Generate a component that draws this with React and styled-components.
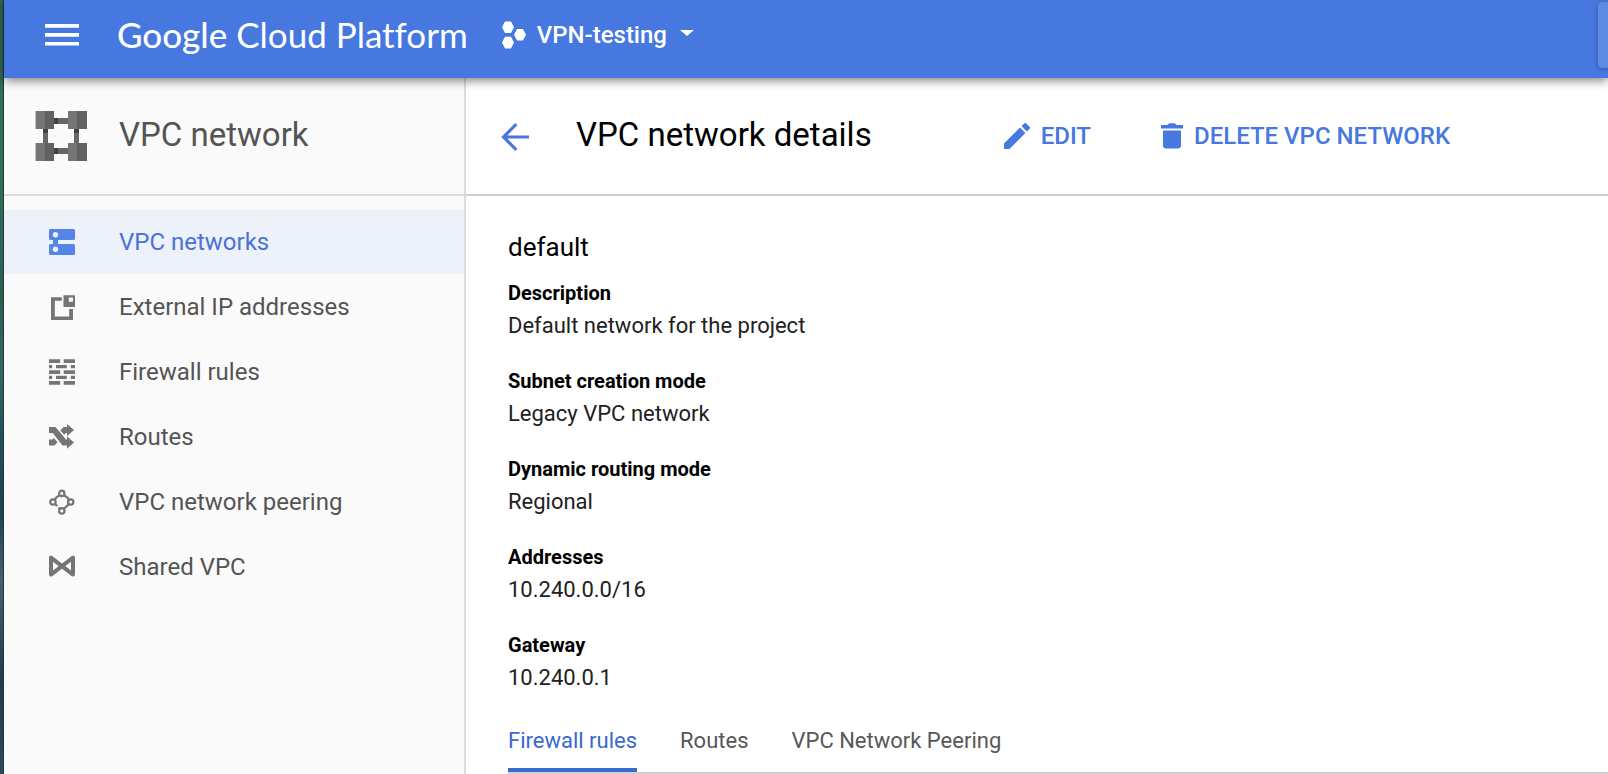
import React from "react";
import styled, { createGlobalStyle, css } from "styled-components";

const blue = "#4678e0";

const GlobalStyle = createGlobalStyle`
  *, *::before, *::after { box-sizing: border-box; }
  body { margin: 0; background: #fff; color: #000; font-family: Roboto, "Liberation Sans", sans-serif; }
  h1, h2, p, ul, dl, dd { margin: 0; padding: 0; }
  button { border: 0; padding: 0; background: none; font: inherit; color: inherit; cursor: pointer; }
  a { color: inherit; text-decoration: none; }
  svg { display: block; flex: none; }
`;

const Page = styled.div`
  min-height: 100vh;
  display: flex;
`;

const DesktopEdge = styled.div`
  flex: none;
  width: 4px;
  border-right: 1px solid #1d3b3c;
  background: linear-gradient(#2f6b55, #33705c 20%, #2b5f52 38%, #35695f 48%, #24505a 56%, #1d3f5c 66%, #46616f 75%, #22394f 88%, #2c4a5e);
`;

const Shell = styled.div`
  flex: 1;
  min-width: 0;
  display: flex;
  flex-direction: column;
`;

const TopBar = styled.header`
  position: relative;
  z-index: 1;
  flex: none;
  display: flex;
  align-items: center;
  height: 78px;
  padding: 0 0 8px 41px;
  background: ${blue};
  color: #fff;
  box-shadow: 0 2px 10px rgba(0, 0, 0, 0.55);
`;

const Logo = styled.a`
  margin: 0 34px 0 38px;
  padding-bottom: 2px;
  font-family: Lato, sans-serif;
  font-size: 35px;
  line-height: 40px;
  font-variant-ligatures: none;
  white-space: nowrap;
`;

const LogoStrong = styled.span`
  font-weight: 500;
`;

const ProjectButton = styled.button`
  display: flex;
  align-items: center;
  gap: 11px;
  font-size: 24px;
  line-height: 28px;
  font-weight: 500;
  white-space: nowrap;

  svg:last-child { margin-left: 2px; }
`;

const SearchBox = styled.input`
  width: 10px;
  height: 66px;
  margin-left: auto;
  border: 0;
  padding: 0;
  border-radius: 4px 0 0 4px;
  background: #5e8ae4;
  box-shadow: 0 1px 4px rgba(0, 0, 0, 0.3);
`;

const Body = styled.div`
  flex: 1;
  display: flex;
`;

const Sidebar = styled.nav`
  flex: none;
  width: 462px;
  border-right: 2px solid #dcdcdc;
  background: #fafafa;
  color: #545454;
`;

const SectionHead = styled.div`
  display: flex;
  align-items: center;
  gap: 32px;
  height: 118px;
  padding-left: 31px;
  border-bottom: 2px solid #dcdcdc;
`;

const Title = styled.h1`
  padding-bottom: 2px;
  font-size: 33px;
  line-height: 40px;
  font-weight: 400;
  white-space: nowrap;
`;

const Menu = styled.ul`
  display: flex;
  flex-direction: column;
  gap: 1px;
  padding-top: 14px;
  list-style: none;
`;

const MenuLink = styled.a`
  display: flex;
  align-items: center;
  gap: 44px;
  height: 64px;
  padding-left: 45px;
  font-size: 24px;
  line-height: 28px;

  svg { color: #757575; }

  ${({ $active }) => $active && css`
    background: #ecf1fa;
    color: #4a72d8;
    svg { color: #5585e6; }
  `}
`;

const Main = styled.main`
  flex: 1;
  min-width: 0;
`;

const Toolbar = styled.div`
  display: flex;
  align-items: center;
  height: 118px;
  padding-left: 35px;
  border-bottom: 2px solid #d0d0d0;

  ${Title} { margin: 0 132px 0 47px; }
`;

const BackButton = styled.button`
  padding-top: 2px;
  color: ${blue};
`;

const ActionButton = styled.button`
  display: flex;
  align-items: center;
  gap: 11px;
  margin-right: 70px;
  color: ${blue};
  font-size: 24px;
  line-height: 28px;
  font-weight: 500;
  white-space: nowrap;
`;

const Details = styled.section`
  padding: 35px 0 0 42px;
`;

const NetworkName = styled.h2`
  font-size: 26px;
  line-height: 32px;
  font-weight: 400;
`;

const Properties = styled.dl`
  display: flex;
  flex-direction: column;
  gap: 22px;
  padding-top: 14px;
`;

const PropertyName = styled.dt`
  font-size: 20px;
  line-height: 32px;
  font-weight: 700;
`;

const PropertyValue = styled.dd`
  font-size: 22px;
  line-height: 34px;
  color: #212121;
`;

const Tabs = styled.div`
  display: flex;
  gap: 43px;
  margin-top: 16px;
  border-bottom: 2px solid #d0d0d0;
`;

const Tab = styled.button`
  padding: 14px 0 11px;
  border-bottom: 4px solid ${({ $active }) => ($active ? "#3b68d1" : "transparent")};
  color: ${({ $active }) => ($active ? "#3b68d1" : "#575757")};
  font-size: 22px;
  line-height: 32px;
  white-space: nowrap;
`;

const HamburgerIcon = () => (
  <svg width="34" height="22" viewBox="0 0 34 22" fill="currentColor">
    <path d="M0 0h34v3.8H0zM0 9h34v3.8H0zM0 18h34v3.6H0z" />
  </svg>
);

const ProjectIcon = () => (
  <svg width="24" height="28" viewBox="0 0 24 28" fill="currentColor">
    <path d="M3 .4h6l3 5.8-3 5.8H3L0 6.200zM3 15.800h6l3 5.800-3 5.800H3L0 21.600zM15 8h6l3 5.800-3 5.800h-6l-3-5.800z" />
  </svg>
);

const CaretIcon = () => (
  <svg width="14" height="10" viewBox="0 0 14 10" fill="currentColor">
    <path d="M0 0h14L7 6z" />
  </svg>
);

const NetworkIcon = () => (
  <svg width="52" height="50" viewBox="0 0 52 50">
    <path fill="#666" d="M19 7h14v6H19zM19 37h14v6H19zM8 18h5v14H8zM39 18h5v14h-5z" />
    <path fill="#424242" d="M19 7h4v6h-4zM19 37h4v6h-4zM8 18h5v4H8zM39 18h5v4h-5z" />
    <path fill="#757575" d="M.6 0H10v18H.6zM33 0h9v18h-9zM.6 32H10v18H.6zM33 32h9v18h-9z" />
    <path fill="#616161" d="M10 0h9v18h-9zM42 0h10v18H42zM10 32h9v18h-9zM42 32h10v18H42z" />
  </svg>
);

const MenuIcon = ({ children }) => (
  <svg width="26" height="26" viewBox="0 0 26 26" fill="currentColor">{children}</svg>
);

const NetworksIcon = () => (
  <MenuIcon>
    <path
      fillRule="evenodd"
      d="M1.500 0h23Q26 0 26 1.500v8Q26 11 24.500 11H9v4h15.500q1.500 0 1.500 1.500v8q0 1.500-1.500 1.500h-23Q0 26 0 24.500v-8Q0 15 1.500 15H4v-4H1.500Q0 11 0 9.500v-8Q0 0 1.500 0zM6.500 3a2.700 2.700 0 1 0 0 5.400 2.700 2.700 0 0 0 0-5.400zm0 14.500a2.700 2.700 0 1 0 0 5.400 2.700 2.700 0 0 0 0-5.400z"
    />
  </MenuIcon>
);

const AddressIcon = () => (
  <MenuIcon>
    <path d="M2 3.200h10.800v3.600H5.800v15.600h14.400V15H24v11H2z" />
    <path fillRule="evenodd" d="M14.500 1.300H26V13H14.500zM19.800 3.600v4.200H24V3.600z" />
  </MenuIcon>
);

const FirewallIcon = () => (
  <MenuIcon>
    <path d="M0 .3h11.200V4H0zM14.700.3H26V4H14.700zM0 6h3.200v3.300H0zM7 6h10.800v3.300H7zM21.800 6H26v3.300h-4.200zM0 11.200h11.200V15H0zM14.700 11.200H26V15H14.700zM0 16.800h3.200v3.300H0zM7 16.800h10.800v3.300H7zM21.800 16.800H26v3.300h-4.200zM0 22h11.200v3.700H0zM14.700 22H26v3.700H14.700z" />
  </MenuIcon>
);

const RoutesIcon = () => (
  <MenuIcon>
    <path d="M0 3h6.500L17 15.500h1v-3.200l7 6.200-7 6.200v-3.200h-4.500L3.800 9H0z" />
    <path d="M18 3V0l7 6-7 6.200V9h-1.200l-1.600 1.800L11.300 6.500 14.500 3zM0 15.500h3.500l1.300-1.500 3.700 4.300L5.500 21.500H0z" />
  </MenuIcon>
);

const PeeringIcon = () => (
  <MenuIcon>
    <g fill="none" stroke="currentColor" strokeWidth="2.200">
      <circle cx="12.800" cy="4.400" r="2.700" />
      <circle cx="3.900" cy="13" r="2.700" />
      <circle cx="21.700" cy="13" r="2.700" />
      <circle cx="12.800" cy="21.900" r="2.700" />
      <path d="M10.600 6.200Q7 8 5.800 10.800M15 6.200Q18.600 8 19.800 10.800M19.900 15.100 15 19.800M5.800 15l2.600 2M10.800 20l-1-1.600" />
    </g>
  </MenuIcon>
);

const SharedIcon = () => (
  <MenuIcon>
    <path fill="none" stroke="currentColor" strokeWidth="4" strokeLinejoin="round" d="M2 3.600v17L24 3.600v17z" />
  </MenuIcon>
);

const BackIcon = () => (
  <svg width="28" height="28" viewBox="0 0 28 28" fill="none" stroke="currentColor" strokeWidth="3.200">
    <path d="M28 14H3M15.300 1.200 2.500 14l12.800 12.800" />
  </svg>
);

const PencilIcon = () => (
  <svg width="26" height="26" viewBox="3 3 18 18" fill="currentColor">
    <path d="M3 17.250V21h3.750L17.810 9.940l-3.750-3.750zM20.710 7.040a1 1 0 0 0 0-1.410l-2.340-2.340a1 1 0 0 0-1.410 0l-1.830 1.830 3.750 3.750z" />
  </svg>
);

const TrashIcon = () => (
  <svg width="22" height="26" viewBox="0 0 22 26" fill="currentColor">
    <path d="M0 2h6.500Q7.500.3 9 .3h4q1.500 0 2.500 1.700H22v3.600H0zM2 7.500h18v15q0 3-3 3H5q-3 0-3-3z" />
  </svg>
);

const menu = [
  { label: "VPC networks", Icon: NetworksIcon, active: true },
  { label: "External IP addresses", Icon: AddressIcon },
  { label: "Firewall rules", Icon: FirewallIcon },
  { label: "Routes", Icon: RoutesIcon },
  { label: "VPC network peering", Icon: PeeringIcon },
  { label: "Shared VPC", Icon: SharedIcon },
];

const properties = [
  ["Description", "Default network for the project"],
  ["Subnet creation mode", "Legacy VPC network"],
  ["Dynamic routing mode", "Regional"],
  ["Addresses", "10.240.0.0/16"],
  ["Gateway", "10.240.0.1"],
];

const tabs = ["Firewall rules", "Routes", "VPC Network Peering"];

export default function App() {
  return (
    <Page>
      <GlobalStyle />
      <DesktopEdge />
      <Shell>
        <TopBar>
          <button type="button" aria-label="Menu"><HamburgerIcon /></button>
          <Logo href="#home"><LogoStrong>Google</LogoStrong> Cloud Platform</Logo>
          <ProjectButton type="button">
            <ProjectIcon />
            VPN-testing
            <CaretIcon />
          </ProjectButton>
          <SearchBox type="search" aria-label="Search" />
        </TopBar>
        <Body>
          <Sidebar>
            <SectionHead>
              <NetworkIcon />
              <Title as="p">VPC network</Title>
            </SectionHead>
            <Menu>
              {menu.map(({ label, Icon, active }) => (
                <li key={label}>
                  <MenuLink href="#menu" $active={active} aria-current={active ? "page" : undefined}>
                    <Icon />
                    {label}
                  </MenuLink>
                </li>
              ))}
            </Menu>
          </Sidebar>
          <Main>
            <Toolbar>
              <BackButton type="button" aria-label="Back"><BackIcon /></BackButton>
              <Title>VPC network details</Title>
              <ActionButton type="button"><PencilIcon />EDIT</ActionButton>
              <ActionButton type="button"><TrashIcon />DELETE VPC NETWORK</ActionButton>
            </Toolbar>
            <Details>
              <NetworkName>default</NetworkName>
              <Properties>
                {properties.map(([name, value]) => (
                  <div key={name}>
                    <PropertyName>{name}</PropertyName>
                    <PropertyValue>{value}</PropertyValue>
                  </div>
                ))}
              </Properties>
              <Tabs role="tablist">
                {tabs.map((label, i) => (
                  <Tab key={label} type="button" role="tab" aria-selected={i === 0} $active={i === 0}>
                    {label}
                  </Tab>
                ))}
              </Tabs>
            </Details>
          </Main>
        </Body>
      </Shell>
    </Page>
  );
}
